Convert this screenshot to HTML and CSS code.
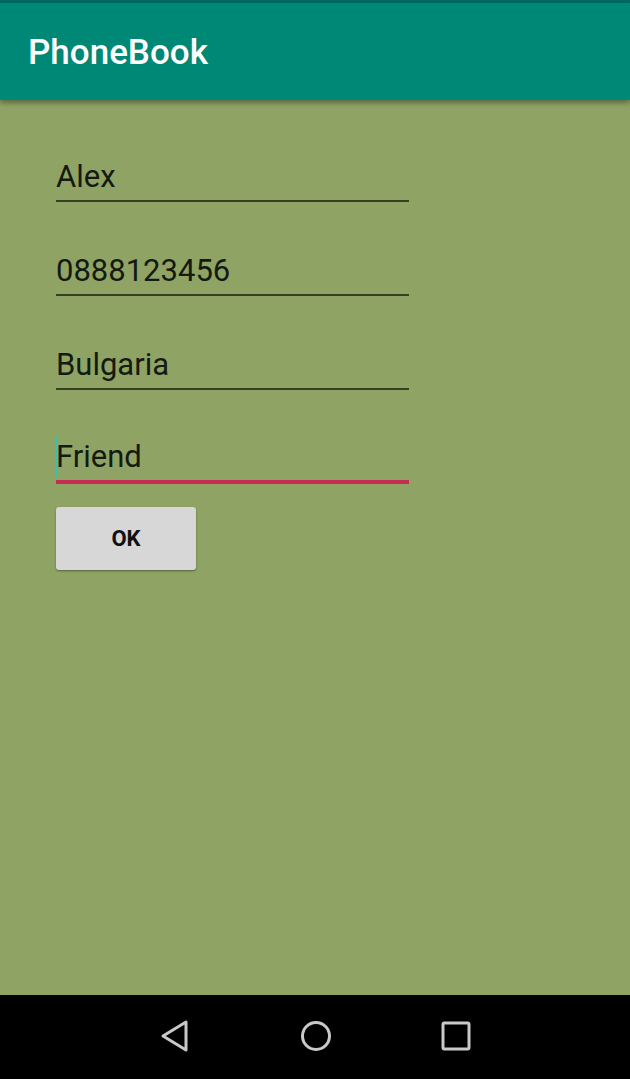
FILE: index.html
```html
<!DOCTYPE html>
<html>
<head>
<meta charset="utf-8">
<link rel="stylesheet" href="styles.css">
</head>
<body>
<div class="screen">
  <div class="status"></div>
  <header class="appbar"><h1 class="title">PhoneBook</h1></header>
  <main class="content">
    <div class="field"><span class="value">Alex</span></div>
    <div class="field"><span class="value">0888123456</span></div>
    <div class="field"><span class="value">Bulgaria</span></div>
    <div class="field focused"><span class="caret"></span><span class="value">Friend</span></div>
    <button class="btn">OK</button>
  </main>
  <nav class="navbar">
    <svg class="nav-icon" width="36" height="36" viewBox="0 0 36 36"><path d="M28 4 L28 32 L5 18 Z" fill="none" stroke="#c9c9c9" stroke-width="3" stroke-linejoin="round"/></svg>
    <svg class="nav-icon" width="36" height="36" viewBox="0 0 36 36"><circle cx="18" cy="18" r="13.5" fill="none" stroke="#c9c9c9" stroke-width="3"/></svg>
    <svg class="nav-icon" width="36" height="36" viewBox="0 0 36 36"><rect x="5" y="5" width="26" height="26" rx="1.5" fill="none" stroke="#c9c9c9" stroke-width="3"/></svg>
  </nav>
</div>
</body>
</html>
```
FILE: styles.css
```css
html, body {
  margin: 0;
  padding: 0;
  background: #8fa365;
}
.screen {
  width: 630px;
  height: 1079px;
  display: flex;
  flex-direction: column;
  font-family: Roboto, "Noto Sans", sans-serif;
  background: #8fa365;
  overflow: hidden;
}
.status {
  height: 3px;
  background: #00695f;
  flex: none;
}
.appbar {
  height: 97px;
  flex: none;
  background: #008877;
  display: flex;
  align-items: center;
  padding-left: 28px;
  box-shadow: 0 3px 5px rgba(0, 0, 0, 0.35);
  position: relative;
  z-index: 1;
}
.title {
  margin: 0;
  color: #ffffff;
  font-size: 35px;
  font-weight: 500;
  letter-spacing: 0;
  padding-top: 2px;
}
.content {
  flex: 1;
  display: flex;
  flex-direction: column;
  align-items: flex-start;
  padding: 54px 0 0 56px;
}
.field {
  width: 353px;
  height: 46px;
  border-bottom: 2px solid #34401f;
  display: flex;
  align-items: flex-end;
  margin-bottom: 46px;
  position: relative;
  box-sizing: content-box;
}
.value {
  font-size: 31px;
  color: #141a0f;
  line-height: 1;
  padding-bottom: 8px;
}
.field.focused {
  border-bottom: 4px solid #c62d52;
  height: 44px;
  margin-bottom: 23px;
}
.caret {
  position: absolute;
  left: 0;
  top: 0;
  width: 2px;
  height: 42px;
  background: #3cbfae;
}
.btn {
  width: 140px;
  height: 63px;
  background: #d6d7d6;
  border: none;
  border-radius: 3px;
  box-shadow: 0 1px 2px rgba(0, 0, 0, 0.4);
  font-family: Roboto, "Noto Sans", sans-serif;
  font-size: 22px;
  font-weight: 700;
  color: #111;
  padding: 0;
}
.navbar {
  height: 84px;
  box-sizing: border-box;
  flex: none;
  background: #000000;
  display: flex;
  justify-content: center;
  align-items: center;
  gap: 104px;
  padding: 0 0 2px 2px;
}
.nav-icon {
  display: block;
}
```
